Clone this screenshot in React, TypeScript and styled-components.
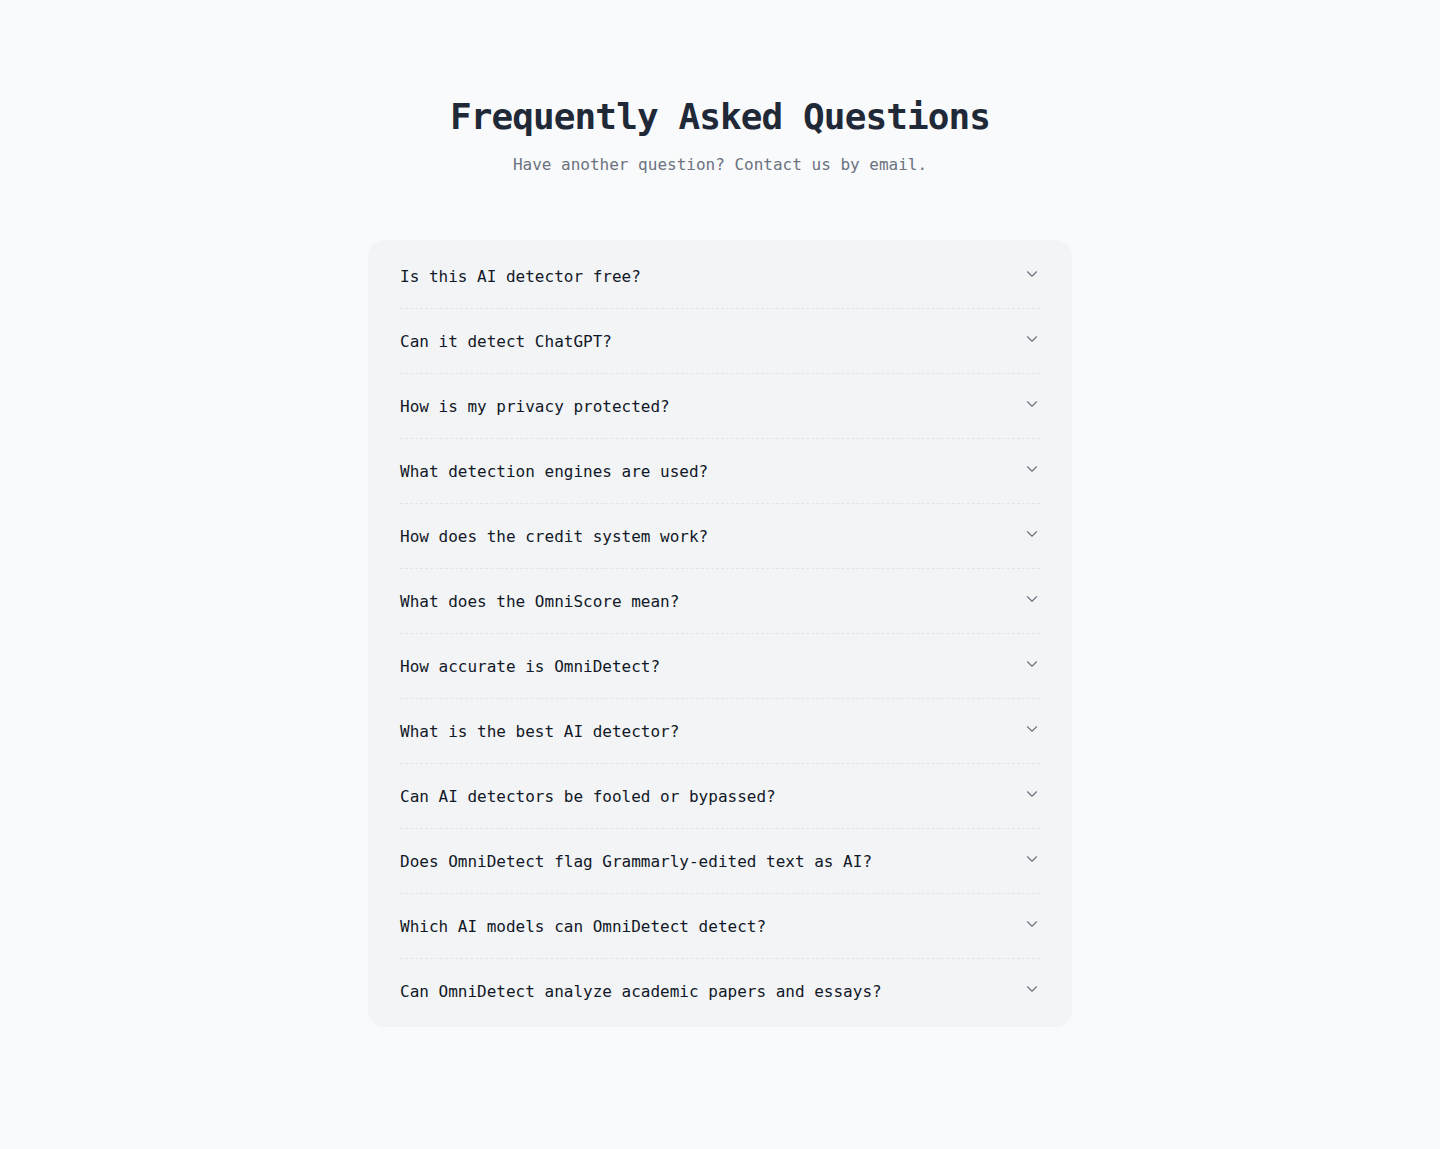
import styled, { createGlobalStyle } from 'styled-components';
import { ChevronDown } from 'lucide-react';

const GlobalStyle = createGlobalStyle`
    body {
        margin: 0;
        background-color: #f9fafb;
        font-family: 'DejaVu Sans Mono', 'Liberation Mono', monospace;
    }
`;

const Section = styled.section`
    display: flex;
    flex-direction: column;
    align-items: center;
    padding: 97px 16px 120px;
`;

const Heading = styled.h2`
    margin: 0;
    font-size: 36px;
    line-height: 40px;
    font-weight: 700;
    letter-spacing: -0.025em;
    color: #1f2937;
`;

const Subheading = styled.p`
    margin: 16px 0 0;
    font-size: 16px;
    line-height: 24px;
    color: #6b7280;
`;

const Card = styled.div`
    width: 704px;
    box-sizing: border-box;
    margin-top: 63px;
    padding: 4px 32px;
    background-color: #f3f4f6;
    border-radius: 16px;
`;

const Item = styled.div`
    border-bottom: 1px dashed #e2e4e8;

    &:last-child {
        border-bottom: none;
    }
`;

const Question = styled.button`
    display: flex;
    width: 100%;
    justify-content: space-between;
    align-items: flex-start;
    padding: 21px 0 19px;
    border: none;
    background: none;
    cursor: pointer;
    font-family: inherit;
    font-size: 16px;
    line-height: 24px;
    text-align: left;
    color: #111827;
`;

const Chevron = styled(ChevronDown)`
    flex-shrink: 0;
    margin-top: 0;
    margin-right: -1px;
    color: #6b7280;
`;

const questions = [
    'Is this AI detector free?',
    'Can it detect ChatGPT?',
    'How is my privacy protected?',
    'What detection engines are used?',
    'How does the credit system work?',
    'What does the OmniScore mean?',
    'How accurate is OmniDetect?',
    'What is the best AI detector?',
    'Can AI detectors be fooled or bypassed?',
    'Does OmniDetect flag Grammarly-edited text as AI?',
    'Which AI models can OmniDetect detect?',
    'Can OmniDetect analyze academic papers and essays?',
];

const App = () => {
    return (
        <>
            <GlobalStyle />
            <Section>
                <Heading>Frequently Asked Questions</Heading>
                <Subheading>Have another question? Contact us by email.</Subheading>
                <Card>
                    {questions.map((q) => (
                        <Item key={q}>
                            <Question>
                                <span>{q}</span>
                                <Chevron size={18} strokeWidth={1.5} />
                            </Question>
                        </Item>
                    ))}
                </Card>
            </Section>
        </>
    );
};

export default App;
